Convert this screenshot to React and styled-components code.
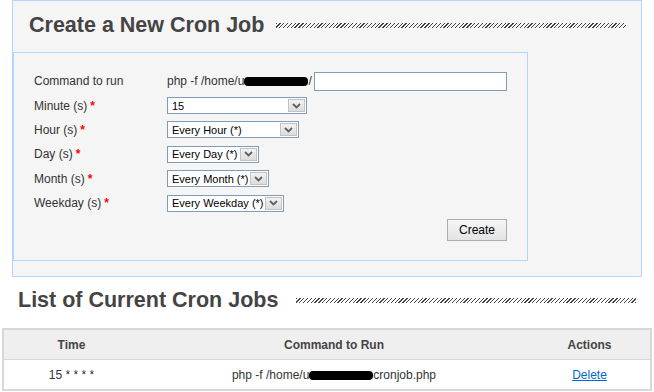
import React from "react";
import styled, { createGlobalStyle } from "styled-components";

const GlobalStyle = createGlobalStyle`
  body {
    margin: 0;
    background: #fff;
    font-family: "Liberation Sans", Arial, sans-serif;
  }
`;

const Panel = styled.div`
  box-sizing: border-box;
  width: 630px;
  height: 277px;
  margin-left: 12px;
  padding-top: 13px;
  border: 1px solid #b3d4fc;
  background: #f5f5f5;
`;

const TitleRow = styled.div`
  display: flex;
  align-items: center;
  height: 22px;
  padding: ${p => p.$pad};
`;

const Title = styled.h2`
  margin: 0;
  font-size: 21.5px;
  line-height: 22px;
  font-weight: bold;
  color: #444;
  white-space: nowrap;
`;

const Hatch = styled.div`
  flex: 1;
  height: 5px;
  margin-left: ${p => p.$gap}px;
  background: repeating-linear-gradient(135deg, #222 0, #222 0.9px, transparent 0.9px, transparent 2.7px);
  opacity: 0.85;
`;

const FormBox = styled.div`
  box-sizing: border-box;
  width: 515px;
  height: 209px;
  margin-top: 16px;
  padding: 16px 20px 0 20px;
  border: 1px solid #b3d4fc;
`;

const Grid = styled.div`
  display: grid;
  grid-template-columns: 133px auto;
  grid-auto-rows: 24.4px;
  align-items: center;
`;

const Label = styled.div`
  font-size: 12px;
  color: #333;
`;

const Req = styled.span`
  color: #f00;
  font-weight: bold;
  margin-left: 3px;
`;

const Field = styled.div`
  display: flex;
  align-items: center;
  font-size: 12px;
  color: #333;
`;

const Redact = styled.span`
  display: inline-block;
  width: ${p => p.$w}px;
  height: 9px;
  background: #000;
  border-radius: 4px;
  vertical-align: middle;
`;

const TextInput = styled.div`
  box-sizing: border-box;
  width: 193px;
  height: 19px;
  margin-left: 2px;
  border: 1px solid #7f9db9;
  background: #fff;
`;

const SelectBox = styled.div`
  box-sizing: border-box;
  display: flex;
  align-items: center;
  width: ${p => p.$w}px;
  height: 17px;
  padding: 1px;
  border: 1px solid #7f9db9;
  background: #fff;
  font-size: 11px;
  color: #000;
`;

const SelectText = styled.span`
  flex: 1;
  min-width: 0;
  padding-left: 3px;
  white-space: nowrap;
`;

const Arrow = styled.span`
  box-sizing: border-box;
  flex-shrink: 0;
  display: flex;
  align-items: center;
  justify-content: center;
  width: 17px;
  height: 100%;
  border: 1px solid #c2c2c2;
  background: linear-gradient(#f2f2f2, #dcdcdc);
`;

const ButtonRow = styled.div`
  display: flex;
  justify-content: flex-end;
  margin-top: 4px;
`;

const Button = styled.div`
  box-sizing: border-box;
  display: flex;
  align-items: center;
  justify-content: center;
  width: 60px;
  height: 22px;
  border: 1px solid #acacac;
  background: linear-gradient(#f6f6f6, #e3e3e3);
  font-size: 12px;
  color: #000;
`;

const Table = styled.table`
  width: 650px;
  margin: 17px 0 0 2px;
  border: 2px solid #d8d8d8;
  border-spacing: 0;
  font-size: 12px;
`;

const Th = styled.th`
  width: ${p => p.$w || "auto"};
  height: 29px;
  padding: 0;
  background: #efefef;
  border-bottom: 1px solid #d6d6d6;
  color: #444;
  font-weight: bold;
  text-align: center;
`;

const Td = styled.td`
  height: 29px;
  padding: 0;
  background: #fff;
  color: #333;
  text-align: center;
  white-space: nowrap;
`;

const Link = styled.a`
  color: #0066cc;
  text-decoration: underline;
`;

const Select = ({ w, value }) => (
  <SelectBox $w={w}>
    <SelectText>{value}</SelectText>
    <Arrow>
      <svg width="9" height="6" viewBox="0 0 9 6">
        <path d="M1 1 L4.5 4.5 L8 1" fill="none" stroke="#606060" strokeWidth="1.8" />
      </svg>
    </Arrow>
  </SelectBox>
);

const rows = [
  ["Minute (s)", 140, "15"],
  ["Hour (s)", 132, "Every Hour (*)"],
  ["Day (s)", 92, "Every Day (*)"],
  ["Month (s)", 102, "Every Month (*)"],
  ["Weekday (s)", 117, "Every Weekday (*)"],
];

export default function App() {
  return (
    <>
      <GlobalStyle />
      <Panel>
        <TitleRow $pad="0 15px 0 16px">
          <Title>Create a New Cron Job</Title>
          <Hatch $gap={12} />
        </TitleRow>
        <FormBox>
          <Grid>
            <Label>Command to run</Label>
            <Field>
              php -f /home/u<Redact $w={64} />/
              <TextInput />
            </Field>
            {rows.map(([label, w, value]) => (
              <React.Fragment key={label}>
                <Label>
                  {label}<Req>*</Req>
                </Label>
                <Field>
                  <Select w={w} value={value} />
                </Field>
              </React.Fragment>
            ))}
          </Grid>
          <ButtonRow>
            <Button>Create</Button>
          </ButtonRow>
        </FormBox>
      </Panel>

      <TitleRow $pad="0 18px 0 18px" style={{ marginTop: 12 }}>
        <Title>List of Current Cron Jobs</Title>
        <Hatch $gap={18} />
      </TitleRow>

      <Table>
        <thead>
          <tr>
            <Th $w="135px">Time</Th>
            <Th>Command to Run</Th>
            <Th $w="121px">Actions</Th>
          </tr>
        </thead>
        <tbody>
          <tr>
            <Td>15 * * * *</Td>
            <Td>
              php -f /home/u<Redact $w={64} />cronjob.php
            </Td>
            <Td>
              <Link href="#">Delete</Link>
            </Td>
          </tr>
        </tbody>
      </Table>
    </>
  );
}
